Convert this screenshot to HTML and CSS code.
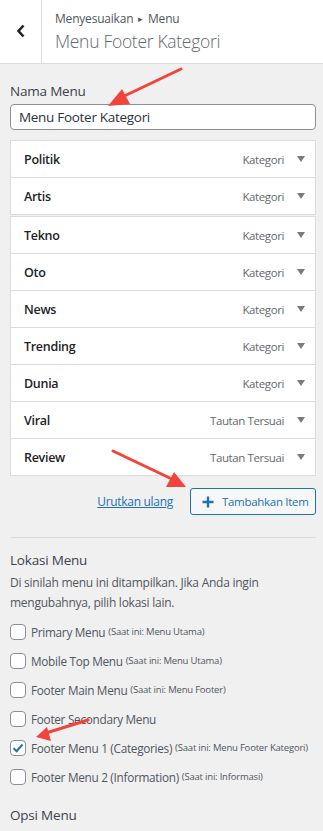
FILE: index.html
```html
<!DOCTYPE html>
<html lang="id">
<head>
<meta charset="utf-8">
<title>Menu Footer Kategori</title>
<link rel="stylesheet" href="styles.css">
</head>
<body>
<div class="header">
  <div class="back">
    <svg width="10" height="14" viewBox="0 0 10 14"><path d="M7.5 1.5 L2.5 7 L7.5 12.5" fill="none" stroke="#1d2327" stroke-width="2.6"/></svg>
  </div>
  <div class="titles">
    <div class="crumb">Menyesuaikan <span class="tri">▸</span> Menu</div>
    <div class="title">Menu Footer Kategori</div>
  </div>
</div>

<div class="content">
  <div class="label">Nama Menu</div>
  <div class="input">Menu Footer Kategori</div>

  <div class="items">
    <div class="item"><span class="name">Politik</span><span class="type">Kategori</span><span class="caret"></span></div>
    <div class="item"><span class="name">Artis</span><span class="type">Kategori</span><span class="caret"></span></div>
    <div class="item gap"><span class="name">Tekno</span><span class="type">Kategori</span><span class="caret"></span></div>
    <div class="item"><span class="name">Oto</span><span class="type">Kategori</span><span class="caret"></span></div>
    <div class="item"><span class="name">News</span><span class="type">Kategori</span><span class="caret"></span></div>
    <div class="item"><span class="name">Trending</span><span class="type">Kategori</span><span class="caret"></span></div>
    <div class="item"><span class="name">Dunia</span><span class="type">Kategori</span><span class="caret"></span></div>
    <div class="item"><span class="name">Viral</span><span class="type">Tautan Tersuai</span><span class="caret"></span></div>
    <div class="item"><span class="name">Review</span><span class="type">Tautan Tersuai</span><span class="caret"></span></div>
  </div>

  <div class="actions">
    <a class="reorder" href="#">Urutkan ulang</a>
    <div class="btn"><svg width="12" height="12" viewBox="0 0 12 12"><path d="M6 0.5V11.5M0.5 6H11.5" stroke="#2271b1" stroke-width="2.4"/></svg>Tambahkan Item</div>
  </div>

  <div class="sep"></div>

  <div class="label">Lokasi Menu</div>
  <p class="desc">Di sinilah menu ini ditampilkan. Jika Anda ingin mengubahnya, pilih lokasi lain.</p>

  <div class="locs">
    <div class="loc"><span class="cb"></span>Primary Menu <small>(Saat ini: Menu Utama)</small></div>
    <div class="loc"><span class="cb"></span>Mobile Top Menu <small>(Saat ini: Menu Utama)</small></div>
    <div class="loc"><span class="cb"></span>Footer Main Menu <small>(Saat ini: Menu Footer)</small></div>
    <div class="loc"><span class="cb"></span>Footer Secondary Menu</div>
    <div class="loc"><span class="cb checked"><svg width="14" height="14" viewBox="0 0 14 14"><path d="M2.5 7.2 L5.6 10.2 L11.5 3.5" fill="none" stroke="#2271b1" stroke-width="2"/></svg></span>Footer Menu 1 (Categories) <small>(Saat ini: Menu Footer Kategori)</small></div>
    <div class="loc"><span class="cb"></span>Footer Menu 2 (Information) <small>(Saat ini: Informasi)</small></div>
  </div>

  <div class="label opsi">Opsi Menu</div>
</div>

<svg class="arrows" width="323" height="831" viewBox="0 0 323 831">
  <g stroke="#f2443a" stroke-width="3" stroke-linecap="round" fill="#f2443a">
    <line x1="181" y1="69" x2="118" y2="99"/>
    <polygon points="108,106 122,89 130,104" stroke="none"/>
    <line x1="113" y1="451" x2="174" y2="480"/>
    <polygon points="186,487 166,487 174,472" stroke="none"/>
    <line x1="88" y1="720" x2="46" y2="733"/>
    <polygon points="36,737 47,727 51,741" stroke="none"/>
  </g>
</svg>
</body>
</html>
```

FILE: styles.css
```css
* { box-sizing: border-box; }
html, body { margin: 0; padding: 0; }
body {
  background: #f0f0f1;
  font-family: "Open Sans", "Noto Sans", sans-serif;
  color: #1d2327;
  width: 323px;
  height: 831px;
  overflow: hidden;
  position: relative;
}
.header {
  display: flex;
  height: 64px;
  background: #fff;
  border-bottom: 1px solid #dcdcde;
}
.back {
  width: 42px;
  border-right: 1px solid #dcdcde;
  display: flex;
  align-items: center;
  justify-content: center;
  padding-bottom: 2px;
}
.titles {
  padding: 9px 0 0 13px;
}
.crumb {
  font-size: 12px;
  line-height: 20px;
  color: #50575e;
  letter-spacing: -0.2px;
}
.tri { font-size: 9px; position: relative; top: -1px; margin: 0 2px; color: #50575e; }
.title {
  font-size: 17.5px;
  font-weight: 300;
  line-height: 22px;
  color: #646970;
  letter-spacing: -0.3px;
}
.content {
  padding: 17px 7px 0 10px;
}
.label {
  font-size: 13.5px;
  font-weight: 500;
  line-height: 20px;
  color: #3c434a;
  letter-spacing: -0.2px;
}
.input {
  margin-top: 3px;
  height: 26px;
  border: 1px solid #8c8f94;
  border-radius: 4px;
  background: #fff;
  font-size: 13.5px;
  line-height: 24px;
  padding-left: 8px;
  color: #2c3338;
  letter-spacing: -0.3px;
}
.items { margin-top: 10px; }
.item {
  display: flex;
  align-items: center;
  height: 38px;
  margin-top: -1px;
  border: 1px solid #dcdcde;
  background: #fff;
  padding: 0 10px 0 13px;
}
.item:first-child { margin-top: 0; }
.item.gap { margin-top: 1px; }
.name {
  flex: 1;
  font-size: 12.5px;
  font-weight: 600;
  color: #1d2327;
  letter-spacing: -0.3px;
}
.type {
  font-size: 11.5px;
  color: #646970;
  letter-spacing: -0.4px;
}
.caret {
  width: 0; height: 0;
  margin-left: 13px;
  border-left: 4px solid transparent;
  border-right: 4px solid transparent;
  border-top: 6px solid #787c82;
}
.actions {
  display: flex;
  justify-content: flex-end;
  align-items: center;
  gap: 17px;
  margin-top: 12px;
}
.reorder {
  font-size: 12px;
  color: #2271b1;
  text-decoration: underline;
  letter-spacing: -0.3px;
}
.btn {
  display: flex;
  align-items: center;
  gap: 8px;
  height: 27px;
  width: 126px;
  padding-left: 11px;
  border: 1px solid #2271b1;
  border-radius: 3px;
  background: #f6f7f7;
  color: #2271b1;
  font-size: 11.5px;
  letter-spacing: -0.3px;
  white-space: nowrap;
}
.sep {
  margin-top: 22px;
  height: 1px;
  background: #dcdcde;
}
.sep + .label { margin-top: 12px; }
.desc {
  margin: 3px 0 0;
  font-size: 12px;
  line-height: 20px;
  color: #50575e;
  letter-spacing: -0.25px;
  padding-right: 20px;
}
.locs { margin-top: 4px; }
.loc {
  display: flex;
  align-items: center;
  height: 29px;
  font-size: 11.8px;
  color: #50575e;
  letter-spacing: -0.3px;
  white-space: nowrap;
}
.loc small {
  font-size: 9.5px;
  margin-left: 3px;
  letter-spacing: -0.2px;
}
.cb {
  width: 16px;
  height: 16px;
  border: 1px solid #8c8f94;
  border-radius: 4px;
  background: #fff;
  margin-right: 5px;
  flex: none;
  display: flex;
  align-items: center;
  justify-content: center;
}
.opsi { margin-top: 14px; }
.arrows {
  position: absolute;
  left: 0;
  top: 0;
  pointer-events: none;
}
```
